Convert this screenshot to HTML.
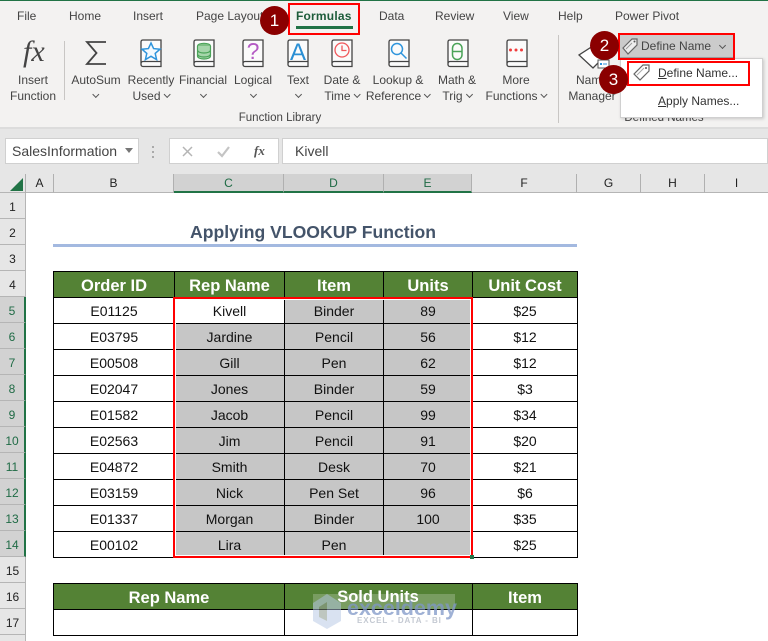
<!DOCTYPE html>
<html><head><meta charset="utf-8"><style>
*{box-sizing:border-box}
html,body{margin:0;padding:0;background:#fff;width:768px;height:641px;overflow:hidden}
body{position:relative;font-family:"Liberation Sans",sans-serif;color:#000}
.a{position:absolute;white-space:nowrap}
.tab{position:absolute;top:9px;font-size:12px;line-height:15px;color:#444;white-space:nowrap}
.lb{position:absolute;font-size:12px;line-height:16px;color:#444;text-align:center;white-space:nowrap;transform:translateX(-50%)}
.c{display:inline-block;width:5px;height:5px;border-right:1px solid #555;border-bottom:1px solid #555;transform:rotate(45deg);vertical-align:3px;margin-left:4px}
.c.o{margin-left:0}
.ch{position:absolute;top:174px;height:19px;background:#e6e6e6;border-right:1px solid #b0b0b0;border-bottom:1px solid #b5b5b5;text-align:center;font-size:12px;line-height:19px;color:#222}
.ch.s{background:#d2d2d2;border-bottom:2px solid #217346;color:#1f6b45}
.rh{position:absolute;left:0;width:26px;height:26px;background:#e6e6e6;border-bottom:1px solid #b5b5b5;border-right:1px solid #b5b5b5;text-align:center;font-size:12px;line-height:28px;color:#222}
.rh.s{background:#d2d2d2;border-right:2px solid #217346;color:#1f6b45}
table{position:absolute;border-collapse:collapse;table-layout:fixed;left:53px}
td{border:1px solid #000;padding:0;text-align:center;height:26px;font-size:14px;line-height:16px;color:#111}
td.h{background:#548235;color:#fff;font-weight:bold;font-size:16.500px;padding-top:2px}
td.g{background:#c6c6c6}
.badge{position:absolute;width:29px;height:29px;border-radius:50%;background:#8b0000;color:#fff;font-size:17px;line-height:29px;text-align:center}
.red{position:absolute;border:2px solid #f00}
</style></head><body>
<div class="a" style="left:0;top:0;width:768px;height:127px;background:#f3f2f1"></div>
<div class="a" style="left:0;top:0;width:768px;height:1px;background:#217346"></div>
<div class="a" style="left:0;top:127px;width:768px;height:47px;background:#e6e6e6;border-top:2px solid #dcdcdc"></div>

<div class="tab" style="left:17px">File</div>
<div class="tab" style="left:69px">Home</div>
<div class="tab" style="left:133px">Insert</div>
<div class="tab" style="left:196px">Page Layout</div>
<div class="tab" style="left:296px;color:#1d5c3a;font-weight:bold;letter-spacing:.2px">Formulas</div>
<div class="a" style="left:296px;top:26px;width:57px;height:3px;background:#217346"></div>
<div class="tab" style="left:379px">Data</div>
<div class="tab" style="left:435px">Review</div>
<div class="tab" style="left:503px">View</div>
<div class="tab" style="left:558px">Help</div>
<div class="tab" style="left:615px">Power Pivot</div>

<svg class="a" style="left:0;top:0" width="768" height="127" viewBox="0 0 768 127" fill="none">
<defs><g id="bk"><path d="M1 26V3q0-2 2-2h18v26.500H3q-2 0-2-2.500t2-2.500h18" stroke="#444" stroke-width="1.300" fill="#fbfbfb"/></g></defs>
<path d="M64.500 41v59M558.500 35v88" stroke="#c8c6c4"/>
<path d="M106 42H87l9.500 11L87 64h19" stroke="#444" stroke-width="1.800"/>
<use href="#bk" x="140" y="39"/><use href="#bk" x="193" y="39"/><use href="#bk" x="242" y="39"/><use href="#bk" x="287" y="39"/><use href="#bk" x="331" y="39"/><use href="#bk" x="388" y="39"/><use href="#bk" x="447" y="39"/><use href="#bk" x="506" y="39"/>
<path d="M151 43l2.600 5.600 6.400.6-4.800 4.200 1.400 6.200-5.600-3.300-5.600 3.300 1.400-6.200-4.800-4.200 6.400-.6z" stroke="#2f95dc" stroke-width="1.500" fill="#f4fafe"/>
<ellipse cx="204" cy="46" rx="6.500" ry="2.800" fill="#7cbf83" stroke="#4aa358"/><path d="M197.500 46v10c0 4 13 4 13 0V46M197.500 50c0 4 13 4 13 0M197.500 54c0 4 13 4 13 0" stroke="#4aa358" stroke-width="1.200" fill="#a6d6ab"/>
<text x="253" y="59" font-family="Liberation Sans" font-size="23" fill="#b45bc4" text-anchor="middle">?</text>
<text x="298" y="60" font-family="Liberation Sans" font-size="24" fill="#2a8fd4" text-anchor="middle">A</text>
<circle cx="342" cy="50" r="7" stroke="#f0575a" stroke-width="1.300"/><path d="M342 45.500v5h4.500" stroke="#f0575a" stroke-width="1.300"/>
<circle cx="397" cy="49" r="5.500" stroke="#2f95dc" stroke-width="1.500"/><path d="M401 53l5.500 5.500" stroke="#2f95dc" stroke-width="1.500"/>
<rect x="452.500" y="43.500" width="9.500" height="16" rx="4.700" stroke="#4aa358" stroke-width="1.500"/><path d="M452.500 51.500h9.500" stroke="#4aa358" stroke-width="1.500"/>
<circle cx="510.500" cy="50" r="1.500" fill="#f03c3c"/><circle cx="516" cy="50" r="1.500" fill="#f03c3c"/><circle cx="521.500" cy="50" r="1.500" fill="#f03c3c"/>
<path d="M596 44l-17 11 14 13 11-11" stroke="#444" stroke-width="1.300" fill="#fff"/>
<rect x="598" y="60" width="11" height="8" fill="#fff" stroke="#555"/><path d="M600 64h2" stroke="#2f95dc" stroke-width="2"/><path d="M603 64h4" stroke="#2f95dc"/>
</svg>
<div class="a" style="left:23px;top:36px;font-family:'Liberation Serif',serif;font-style:italic;font-size:30px;line-height:32px;color:#444">fx</div>

<div class="lb" style="left:33px;top:72px">Insert<br>Function</div>
<div class="lb" style="left:96px;top:72px">AutoSum<br><span class="c o"></span></div>
<div class="lb" style="left:151px;top:72px">Recently<br>Used<span class="c"></span></div>
<div class="lb" style="left:203px;top:72px">Financial<br><span class="c o"></span></div>
<div class="lb" style="left:253px;top:72px">Logical<br><span class="c o"></span></div>
<div class="lb" style="left:298px;top:72px">Text<br><span class="c o"></span></div>
<div class="lb" style="left:342px;top:72px">Date &amp;<br>Time<span class="c"></span></div>
<div class="lb" style="left:398px;top:72px">Lookup &amp;<br>Reference<span class="c"></span></div>
<div class="lb" style="left:457px;top:72px">Math &amp;<br>Trig<span class="c"></span></div>
<div class="lb" style="left:516px;top:72px">More<br>Functions<span class="c"></span></div>
<div class="lb" style="left:592px;top:72px">Name<br>Manager</div>
<div class="lb" style="left:280px;top:111px;font-size:11.500px;line-height:15px">Function Library</div>
<div class="lb" style="left:664px;top:111px;font-size:11.500px;line-height:15px">Defined Names</div>

<div class="a" style="left:619px;top:34px;width:115px;height:24px;background:#cbcbcb;border:1px solid #a0a0a0"></div>
<div class="a" style="left:641px;top:39px;font-size:12px;line-height:15px;color:#444">Define Name</div>
<span class="a c" style="left:720px;top:43px;margin:0"></span>
<div class="a" style="left:620px;top:58px;width:143px;height:60px;background:#fff;border:1px solid #d0d0d0;box-shadow:1px 1px 3px rgba(0,0,0,.18)"></div>
<div class="a" style="left:658px;top:66px;font-size:12px;line-height:15px;color:#333"><u>D</u>efine Name...</div>
<div class="a" style="left:658px;top:94px;font-size:12px;line-height:15px;color:#333"><u>A</u>pply Names...</div>
<svg class="a" style="left:620px;top:36px" width="30" height="46" viewBox="0 0 30 46" fill="none">
<path d="M3 12l9-9h5v6l-9 9z" stroke="#666" stroke-width="1.200" fill="#eee"/><path d="M6 13l6-6" stroke="#999"/><circle cx="14.500" cy="5.500" r="1" fill="#555"/>
<path d="M14 38l9-9h6v6l-9 9z" stroke="#666" stroke-width="1.200" fill="#fff"/><path d="M17 39l7-7" stroke="#aaa"/><circle cx="26" cy="32" r="1" fill="#555"/>
</svg>

<div class="red" style="left:288px;top:3px;width:72px;height:32px"></div>
<div class="red" style="left:618px;top:33px;width:117px;height:27px"></div>
<div class="red" style="left:627px;top:61px;width:123px;height:25px"></div>
<div class="badge" style="left:260px;top:6px">1</div>
<div class="badge" style="left:590px;top:31px">2</div>
<div class="badge" style="left:599px;top:65px">3</div>

<div class="a" style="left:5px;top:138px;width:134px;height:26px;background:#fff;border:1px solid #d0d0d0;padding-left:6px;font-size:14px;line-height:24px;color:#444">SalesInformation</div>
<svg class="a" style="left:125px;top:148px" width="8" height="5"><path d="M0 0h8L4 5z" fill="#777"/></svg>
<svg class="a" style="left:150px;top:145px" width="6" height="14"><path d="M2 1h2v2H2zM2 6h2v2H2zM2 11h2v2H2z" fill="#aaa"/></svg>
<div class="a" style="left:169px;top:138px;width:110px;height:26px;background:#fff;border:1px solid #d0d0d0"></div>
<svg class="a" style="left:180px;top:144px" width="90" height="16" fill="none"><path d="M3 3l9 9M12 3l-9 9" stroke="#b5b5b5" stroke-width="1.500"/><path d="M38 8l4 4 7-9" stroke="#c4c4c4" stroke-width="2.200"/></svg>
<div class="a" style="left:254px;top:142px;font-family:'Liberation Serif',serif;font-style:italic;font-size:13px;line-height:17px;color:#555;font-weight:bold">fx</div>
<div class="a" style="left:282px;top:138px;width:486px;height:26px;background:#fff;border:1px solid #d0d0d0;padding-left:12px;font-size:14px;line-height:24px;color:#444">Kivell</div>

<div class="a" style="left:0;top:174px;width:26px;height:19px;background:#e6e6e6;border-right:1px solid #b0b0b0;border-bottom:1px solid #b5b5b5"></div>
<svg class="a" style="left:10px;top:178px" width="13" height="13"><path d="M13 0v13H0z" fill="#217346"/></svg>
<div class="ch" style="left:26px;width:28px">A</div>
<div class="ch" style="left:54px;width:120px">B</div>
<div class="ch s" style="left:174px;width:110px">C</div>
<div class="ch s" style="left:284px;width:100px">D</div>
<div class="ch s" style="left:384px;width:88px">E</div>
<div class="ch" style="left:472px;width:105px">F</div>
<div class="ch" style="left:577px;width:64px">G</div>
<div class="ch" style="left:641px;width:64px">H</div>
<div class="ch" style="left:705px;width:63px;border-right:0">I</div>

<div class="rh" style="top:193px">1</div><div class="rh" style="top:219px">2</div><div class="rh" style="top:245px">3</div><div class="rh" style="top:271px">4</div>
<div class="rh s" style="top:297px">5</div><div class="rh s" style="top:323px">6</div><div class="rh s" style="top:349px">7</div><div class="rh s" style="top:375px">8</div><div class="rh s" style="top:401px">9</div><div class="rh s" style="top:427px">10</div><div class="rh s" style="top:453px">11</div><div class="rh s" style="top:479px">12</div><div class="rh s" style="top:505px">13</div><div class="rh s" style="top:531px">14</div>
<div class="rh" style="top:557px">15</div><div class="rh" style="top:583px">16</div><div class="rh" style="top:609px">17</div><div class="rh" style="top:635px;height:6px;border-bottom:0"></div>

<div class="a" style="left:53px;top:221px;width:520px;text-align:center;font-weight:bold;font-size:17.600px;line-height:23px;color:#44546a">Applying VLOOKUP Function</div>
<div class="a" style="left:53px;top:244px;width:524px;height:3px;background:#a3b9e0"></div>

<table style="top:271px;width:524px"><colgroup><col style="width:121px"><col style="width:110px"><col style="width:99px"><col style="width:89px"><col style="width:105px"></colgroup>
<tr><td class="h">Order ID</td><td class="h">Rep Name</td><td class="h">Item</td><td class="h">Units</td><td class="h">Unit Cost</td></tr>
<tr><td>E01125</td><td>Kivell</td><td class="g">Binder</td><td class="g">89</td><td>$25</td></tr>
<tr><td>E03795</td><td class="g">Jardine</td><td class="g">Pencil</td><td class="g">56</td><td>$12</td></tr>
<tr><td>E00508</td><td class="g">Gill</td><td class="g">Pen</td><td class="g">62</td><td>$12</td></tr>
<tr><td>E02047</td><td class="g">Jones</td><td class="g">Binder</td><td class="g">59</td><td>$3</td></tr>
<tr><td>E01582</td><td class="g">Jacob</td><td class="g">Pencil</td><td class="g">99</td><td>$34</td></tr>
<tr><td>E02563</td><td class="g">Jim</td><td class="g">Pencil</td><td class="g">91</td><td>$20</td></tr>
<tr><td>E04872</td><td class="g">Smith</td><td class="g">Desk</td><td class="g">70</td><td>$21</td></tr>
<tr><td>E03159</td><td class="g">Nick</td><td class="g">Pen Set</td><td class="g">96</td><td>$6</td></tr>
<tr><td>E01337</td><td class="g">Morgan</td><td class="g">Binder</td><td class="g">100</td><td>$35</td></tr>
<tr><td>E00102</td><td class="g">Lira</td><td class="g">Pen</td><td class="g"></td><td>$25</td></tr>
</table>
<div class="a" style="left:173px;top:297px;width:300px;height:261px;border:2px solid #f00;outline:1px solid #fff;outline-offset:-3px"></div>
<div class="a" style="left:470px;top:555px;width:4px;height:4px;background:#217346"></div>

<table style="top:583px;width:524px"><colgroup><col style="width:231px"><col style="width:188px"><col style="width:105px"></colgroup>
<tr><td class="h">Rep Name</td><td class="h"></td><td class="h">Item</td></tr>
<tr><td></td><td></td><td></td></tr>
</table>

<div class="a" style="left:313px;top:594px;width:142px;height:15px;background:rgba(255,255,255,.22)"></div>
<svg class="a" style="left:313px;top:594px;opacity:.5" width="30" height="36"><path d="M14 0L0 9v18l14 8 14-8V9z" fill="#b4c6e4"/><path d="M14 8L6 13v10l8 4z" fill="#7f8f80"/></svg>
<div class="a" style="left:347px;top:596px;font-size:21.500px;line-height:25px;font-weight:bold;color:#7f97c8;opacity:.75">exceldemy</div>
<div class="a" style="left:357px;top:616px;font-size:8px;line-height:10px;letter-spacing:.9px;font-weight:bold;color:#c4c9d2">EXCEL - DATA - BI</div>
<div class="a" style="left:284px;top:583px;width:188px;height:26px;text-align:center;font-weight:bold;font-size:16.500px;line-height:28px;color:#fff">Sold Units</div>
</body></html>
